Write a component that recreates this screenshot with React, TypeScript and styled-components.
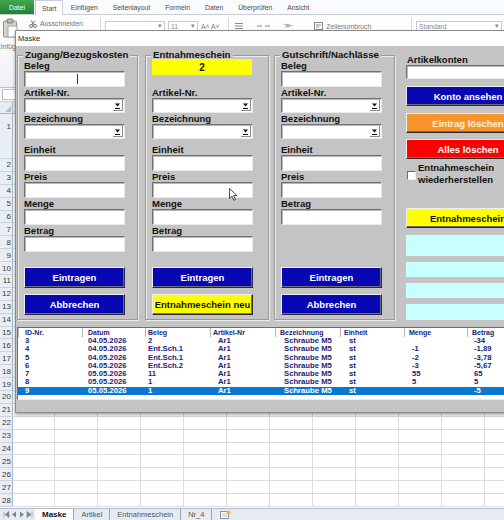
import React from 'react';
import styled, { createGlobalStyle } from 'styled-components';

const UI_FONT = '"Liberation Sans", Arial, sans-serif';
const FORM_GREY = '#c4c4c4';
const NAVY = '#1c1c76';

const GlobalStyle = createGlobalStyle`
  html, body { margin: 0; padding: 0; }
  body { background: #fff; font-family: ${UI_FONT}; }
  * { box-sizing: border-box; }
`;

const Screen = styled.div`
  position: relative;
  width: 504px;
  height: 520px;
  overflow: hidden;
  display: flex;
  flex-direction: column;
  background: #fff;
  font-family: ${UI_FONT};
`;

/* ---------- Excel window behind the form ---------- */

const TabStrip = styled.div`
  height: 15px;
  flex: none;
  display: flex;
  align-items: stretch;
  background: #fafbfc;
  border-bottom: 1px solid #c4ccd6;
  font-size: 6.8px;
  color: #4a4a4a;
  white-space: nowrap;
`;

const FileTab = styled.div`
  width: 34px;
  display: flex;
  align-items: center;
  justify-content: center;
  background: linear-gradient(#43a851, #22803a);
  color: #fff;
`;

const RibbonTab = styled.div<{ $active?: boolean }>`
  display: flex;
  align-items: center;
  padding: 0 ${(p) => (p.$active ? 6 : 7.5)}px;
  margin-left: ${(p) => (p.$active ? 1 : 0)}px;
  margin-bottom: ${(p) => (p.$active ? -1 : 0)}px;
  background: ${(p) => (p.$active ? '#fff' : 'transparent')};
  border: ${(p) => (p.$active ? '1px solid #c4ccd6' : 'none')};
  border-bottom: none;
`;

const Ribbon = styled.div`
  height: 73px;
  flex: none;
  display: flex;
  align-items: flex-start;
  padding-top: 3px;
  background: linear-gradient(#ffffff, #eef1f5);
  border-bottom: 1px solid #b8c1cc;
  font-size: 6.8px;
  color: #707070;
  white-space: nowrap;
`;

const ClipboardGroup = styled.div`
  width: 106px;
  height: 66px;
  flex: none;
  margin-left: -5px;
  display: flex;
  border-right: 1px solid #d6dce4;
`;

const PasteButton = styled.div`
  width: 30px;
  display: flex;
  flex-direction: column;
  align-items: center;
  gap: 5px;
`;

const SmallItem = styled.div`
  height: 11px;
  margin-left: 4px;
  display: flex;
  align-items: center;
  gap: 3px;
`;

const RibbonGroup = styled.div<{ $width: number }>`
  width: ${(p) => p.$width}px;
  height: 66px;
  flex: none;
  padding: 3px 0 0 4px;
  border-right: 1px solid #d6dce4;
  display: flex;
  align-items: flex-start;
  gap: 3px;
`;

const RibbonBox = styled.div<{ $width: number }>`
  width: ${(p) => p.$width}px;
  height: 10px;
  padding: 0 2px;
  display: flex;
  align-items: center;
  justify-content: space-between;
  background: #fff;
  border: 1px solid #c3cbd5;
  color: #8a8a8a;
`;

const RibbonGlyph = styled.span<{ $ml?: number }>`
  height: 10px;
  margin-left: ${(p) => p.$ml ?? 0}px;
  display: flex;
  align-items: center;
  gap: 3px;
  color: #7a7a7a;
`;

const FormulaBar = styled.div`
  height: 14px;
  flex: none;
  display: flex;
  align-items: center;
  padding-left: 2px;
  background: #f4f6f9;
  border-bottom: 1px solid #c9d0d9;
`;

const NameBox = styled.div`
  width: 70px;
  height: 11px;
  background: #fff;
  border: 1px solid #b6bfca;
`;

const Sheet = styled.div`
  flex: 1;
  min-height: 0;
  display: grid;
  grid-template-columns: 13px 42px repeat(11, 43px);
  grid-template-rows: 12px 45px repeat(27, 12.9px);
  overflow: hidden;
`;

const Corner = styled.div`
  display: flex;
  align-items: flex-end;
  justify-content: flex-end;
  padding: 0 1px 1px 0;
  background: #e7ecf2;
  border-right: 1px solid #a9b8c8;
  border-bottom: 1px solid #a9b8c8;
`;

const ColHead = styled.div`
  display: flex;
  align-items: center;
  justify-content: center;
  background: #e7ecf2;
  border-right: 1px solid #c2ccd8;
  border-bottom: 1px solid #a9b8c8;
  font-size: 7.5px;
  color: #444;
`;

const RowHead = styled.div<{ $tall?: boolean }>`
  display: flex;
  align-items: center;
  justify-content: flex-end;
  padding: 0 1px ${(p) => (p.$tall ? 19 : 0)}px 0;
  background: #e9eef4;
  border-right: 1px solid #a9b8c8;
  border-bottom: 1px solid #c9d2dd;
  font-size: 8px;
  color: #3a3a3a;
  overflow: hidden;
`;

const GridCell = styled.div`
  border-right: 1px solid #dadcdd;
  border-bottom: 1px solid #dadcdd;
`;

const SheetTabs = styled.div`
  height: 12px;
  flex: none;
  display: flex;
  align-items: stretch;
  background: #e6ebf1;
  border-top: 1px solid #b0bac6;
  font-size: 7.5px;
  color: #555;
  white-space: nowrap;
`;

const TabNav = styled.div`
  width: 35px;
  display: flex;
  align-items: center;
  justify-content: space-around;
  padding: 0 2px;
`;

const SheetTab = styled.div<{ $active?: boolean }>`
  display: flex;
  align-items: center;
  padding: 0 7px;
  border-right: 1px solid #9aa5b3;
  background: ${(p) => (p.$active ? '#fff' : 'transparent')};
  color: ${(p) => (p.$active ? '#111' : '#555')};
  font-weight: ${(p) => (p.$active ? 'bold' : 'normal')};
  font-size: ${(p) => (p.$active ? 8 : 7.5)}px;
`;

const NewSheet = styled.div`
  display: flex;
  align-items: center;
  padding: 0 8px;
`;

/* ---------- UserForm "Maske" ---------- */

const Dialog = styled.div`
  position: absolute;
  left: 15px;
  top: 30px;
  width: 545px;
  border: 1px solid #8a8a8a;
  background: ${FORM_GREY};
  box-shadow: 0 2px 3px rgba(0, 0, 0, 0.35);
`;

const TitleBar = styled.div`
  height: 15px;
  padding-left: 2px;
  background: #fff;
  color: #1e1e1e;
  font-size: 7.5px;
  line-height: 15px;
`;

const FormBody = styled.div`
  padding: 9px 0 12px 1px;
  display: flex;
  flex-direction: column;
  gap: 7px;
`;

const FormRow = styled.div`
  display: flex;
  align-items: flex-start;
`;

const Frame = styled.div<{ $width: number; $gap: number }>`
  width: ${(p) => p.$width}px;
  height: 265px;
  flex: none;
  margin-right: ${(p) => p.$gap}px;
  padding: 0 0 4px 6px;
  border: 1px solid #9a9a9a;
  box-shadow: inset 1px 1px 0 #ececec, 1px 1px 0 #ececec;
  display: flex;
  flex-direction: column;
`;

const Caption = styled.div`
  align-self: flex-start;
  margin: -7px 0 0 -1px;
  padding: 0 2px;
  background: ${FORM_GREY};
  color: #111;
  font-weight: bold;
  font-size: 9.7px;
  line-height: 11px;
  white-space: nowrap;
`;

const FieldLabel = styled.div<{ $spaced?: boolean }>`
  height: 11px;
  margin-top: ${(p) => (p.$spaced ? 5 : 0)}px;
  color: #111;
  font-weight: bold;
  font-size: 9.5px;
  line-height: 11px;
  white-space: nowrap;
`;

const TextBox = styled.div<{ $h?: number; $w?: number }>`
  width: ${(p) => p.$w ?? 101}px;
  height: ${(p) => p.$h ?? 16}px;
  flex: none;
  display: flex;
  align-items: center;
  background: #fff;
  border: 1px solid;
  border-color: #707070 #e9e9e9 #e9e9e9 #707070;
  box-shadow: inset 1px 1px 0 #b8b8b8;
`;

const ComboBox = styled(TextBox)`
  justify-content: flex-end;
  align-items: flex-start;
`;

const DropButton = styled.div`
  width: 10px;
  height: 11px;
  margin: 1px 1px 0 0;
  display: flex;
  background: #fafafa;
  border-right: 1px solid #8a8a8a;
  border-bottom: 1px solid #8a8a8a;
`;

const Caret = styled.span`
  width: 1px;
  height: 10px;
  margin-left: 52px;
  background: #333;
`;

const NumberBox = styled.div`
  width: 100px;
  height: 16px;
  margin: -1px 0 12px;
  display: flex;
  align-items: center;
  justify-content: center;
  background: #ffff00;
  color: #111;
  font-weight: bold;
  font-size: 10px;
`;

const ButtonStack = styled.div`
  margin-top: auto;
  display: flex;
  flex-direction: column;
  gap: 6px;
`;

const FormButton = styled.button<{ $bg: string; $fg: string; $w?: number; $h?: number; $mt?: number }>`
  display: block;
  width: ${(p) => p.$w ?? 101}px;
  height: ${(p) => p.$h ?? 21}px;
  margin: ${(p) => p.$mt ?? 0}px 0 0 0;
  padding: 0;
  background: ${(p) => p.$bg};
  color: ${(p) => p.$fg};
  border: 1px solid;
  border-color: #ededed #2a2a2a #2a2a2a #ededed;
  box-shadow: inset -1px -1px 0 #6e6e6e;
  font-family: ${UI_FONT};
  font-weight: bold;
  font-size: 9.5px;
  white-space: nowrap;
  overflow: hidden;
`;

const SideColumn = styled.div`
  width: 124px;
  flex: none;
  display: flex;
  flex-direction: column;
`;

const SideLabel = styled.div`
  margin: -1px 0 0 1px;
  height: 11px;
  color: #111;
  font-weight: bold;
  font-size: 9.5px;
  line-height: 11px;
`;

const CheckRow = styled.div`
  margin: 3px 0 0 1px;
  display: flex;
  align-items: center;
  gap: 2px;
  color: #111;
  font-weight: bold;
  font-size: 9.5px;
  line-height: 12px;
`;

const CheckBox = styled.span`
  width: 9px;
  height: 9px;
  flex: none;
  margin-top: 2px;
  background: #fff;
  border: 1px solid;
  border-color: #707070 #eeeeee #eeeeee #707070;
`;

const InfoField = styled.div<{ $h: number; $mt: number }>`
  height: ${(p) => p.$h}px;
  margin-top: ${(p) => p.$mt}px;
  background: #c8ffff;
`;

const ListBox = styled.div`
  width: 532px;
  height: 73px;
  background: #fff;
  border: 1px solid;
  border-color: #6e6e6e #ececec #ececec #6e6e6e;
  color: ${NAVY};
  font-weight: bold;
  overflow: hidden;
`;

const ListHead = styled.div`
  height: 9px;
  display: flex;
`;

const HeadCell = styled.div<{ $w: number; $pad: number }>`
  width: ${(p) => p.$w}px;
  flex: none;
  padding-left: ${(p) => p.$pad}px;
  border-left: 1px solid #b5b5b5;
  font-size: 7px;
  line-height: 9px;
  white-space: nowrap;
`;

const ListRow = styled.div<{ $selected?: boolean }>`
  height: 8.3px;
  display: flex;
  background: ${(p) => (p.$selected ? '#0a78d2' : 'transparent')};
  color: ${(p) => (p.$selected ? '#fff' : NAVY)};
`;

const ListCell = styled.div<{ $w: number; $pad: number }>`
  width: ${(p) => p.$w}px;
  flex: none;
  padding-left: ${(p) => p.$pad}px;
  font-size: 7.7px;
  line-height: 8.3px;
  white-space: nowrap;
  overflow: hidden;
`;

const Pointer = styled.svg`
  position: absolute;
  left: 229px;
  top: 188px;
  width: 9px;
  height: 13px;
  pointer-events: none;
`;

/* ---------- data ---------- */

const ribbonTabs = ['Einfügen', 'Seitenlayout', 'Formeln', 'Daten', 'Überprüfen', 'Ansicht'];
const colLetters = 'ABCDEFGHIJKL'.split('');
const rowNumbers = Array.from({ length: 28 }, (_, i) => i + 1);

const columns = [
  { title: 'ID-Nr.', w: 64, head: 6, cell: 7 },
  { title: 'Datum', w: 63, head: 5, cell: 6 },
  { title: 'Beleg', w: 65, head: 2, cell: 3 },
  { title: 'Artikel-Nr', w: 65, head: 2, cell: 8 },
  { title: 'Bezeichnung', w: 65, head: 4, cell: 9 },
  { title: 'Einheit', w: 64, head: 3, cell: 9 },
  { title: 'Menge', w: 63, head: 4, cell: 8 },
  { title: 'Betrag', w: 70, head: 4, cell: 7 },
];

const bookings = [
  ['3', '04.05.2026', '2', 'Ar1', 'Schraube M5', 'st', '', '-34'],
  ['4', '04.05.2026', 'Ent.Sch.1', 'Ar1', 'Schraube M5', 'st', '-1', '-1,89'],
  ['5', '04.05.2026', 'Ent.Sch.1', 'Ar1', 'Schraube M5', 'st', '-2', '-3,78'],
  ['6', '04.05.2026', 'Ent.Sch.2', 'Ar1', 'Schraube M5', 'st', '-3', '-5,67'],
  ['7', '05.05.2026', '11', 'Ar1', 'Schraube M5', 'st', '55', '65'],
  ['8', '05.05.2026', '1', 'Ar1', 'Schraube M5', 'st', '5', '5'],
  ['9', '05.05.2026', '1', 'Ar1', 'Schraube M5', 'st', '', '-5'],
];
const selectedId = '9';

type FieldDef = { label: string; combo?: boolean; spaced?: boolean; caret?: boolean };

const fieldsZugang: FieldDef[] = [
  { label: 'Beleg', caret: true },
  { label: 'Artikel-Nr.', combo: true },
  { label: 'Bezeichnung', combo: true },
  { label: 'Einheit', spaced: true },
  { label: 'Preis' },
  { label: 'Menge' },
  { label: 'Betrag' },
];

const fieldsEntnahme: FieldDef[] = [
  { label: 'Artikel-Nr.', combo: true },
  { label: 'Bezeichnung', combo: true },
  { label: 'Einheit', spaced: true },
  { label: 'Preis' },
  { label: 'Menge' },
  { label: 'Betrag' },
];

const fieldsGutschrift: FieldDef[] = [
  { label: 'Beleg' },
  { label: 'Artikel-Nr.', combo: true },
  { label: 'Bezeichnung', combo: true },
  { label: 'Einheit', spaced: true },
  { label: 'Preis' },
  { label: 'Betrag' },
];

const BLUE = '#0707b4';

/* ---------- pieces ---------- */

function DropArrow() {
  return (
    <DropButton>
      <svg width="9" height="10" viewBox="0 0 9 10">
        <path d="M2 3.5h5L4.5 6.5z" fill="#111" />
        <rect x="2" y="8" width="5" height="1" fill="#111" />
      </svg>
    </DropButton>
  );
}

function Fields({ items }: { items: FieldDef[] }) {
  return (
    <>
      {items.map((f, i) => (
        <React.Fragment key={f.label + i}>
          <FieldLabel $spaced={f.spaced}>{f.label}</FieldLabel>
          {f.combo ? (
            <ComboBox $h={15}>
              <DropArrow />
            </ComboBox>
          ) : (
            <TextBox>{f.caret && <Caret />}</TextBox>
          )}
        </React.Fragment>
      ))}
    </>
  );
}

function ExcelBackdrop() {
  return (
    <>
      <TabStrip>
        <FileTab>Datei</FileTab>
        <RibbonTab $active>Start</RibbonTab>
        {ribbonTabs.map((t) => (
          <RibbonTab key={t}>{t}</RibbonTab>
        ))}
      </TabStrip>

      <Ribbon>
        <ClipboardGroup>
          <PasteButton>
            <svg width="16" height="20" viewBox="0 0 16 20">
              <rect x="1.5" y="3" width="13" height="16" rx="1" fill="#d9d3c3" stroke="#9a9484" />
              <rect x="5" y="1" width="6" height="4" rx="1" fill="#b8b8b8" stroke="#7d7d7d" />
              <rect x="6" y="8" width="9" height="11" fill="#fff" stroke="#9aa6b5" />
            </svg>
            <span>Einfügen</span>
          </PasteButton>
          <SmallItem>
            <svg width="8" height="8" viewBox="0 0 8 8">
              <circle cx="2" cy="6" r="1.5" fill="none" stroke="#7a7a7a" />
              <circle cx="6" cy="6" r="1.5" fill="none" stroke="#7a7a7a" />
              <path d="M2.8 5L6 0.5M5.2 5L2 0.5" stroke="#7a7a7a" />
            </svg>
            Ausschneiden
          </SmallItem>
        </ClipboardGroup>

        <RibbonGroup $width={128}>
          <RibbonBox $width={60}>
            <span />
            <span>▾</span>
          </RibbonBox>
          <RibbonBox $width={30}>
            <span>11</span>
            <span>▾</span>
          </RibbonBox>
          <RibbonGlyph>A˄ A˅</RibbonGlyph>
        </RibbonGroup>

        <RibbonGroup $width={183}>
          <RibbonGlyph>
            <svg width="44" height="8" viewBox="0 0 44 8">
              <path d="M2 1.5h8M2 4h8M2 6.5h8M24 4h5M32 4h5" stroke="#8a8a8a" />
            </svg>
          </RibbonGlyph>
          <RibbonGlyph $ml={4}>≫·</RibbonGlyph>
          <RibbonGlyph $ml={18}>
            <svg width="9" height="8" viewBox="0 0 9 8">
              <rect x="0.5" y="0.5" width="8" height="7" fill="#fff" stroke="#8a8a8a" />
              <path d="M2 3h5M2 5h3" stroke="#8a8a8a" />
            </svg>
            Zeilenumbruch
          </RibbonGlyph>
        </RibbonGroup>

        <RibbonGroup $width={100}>
          <RibbonBox $width={86}>
            <span>Standard</span>
            <span>▾</span>
          </RibbonBox>
        </RibbonGroup>
      </Ribbon>

      <FormulaBar>
        <NameBox />
      </FormulaBar>

      <Sheet>
        <Corner>
          <svg width="6" height="6" viewBox="0 0 6 6">
            <path d="M6 0V6H0z" fill="#b4bfcc" />
          </svg>
        </Corner>
        {colLetters.map((l) => (
          <ColHead key={l}>{l}</ColHead>
        ))}
        {rowNumbers.map((r) => (
          <React.Fragment key={r}>
            <RowHead $tall={r === 1}>{r}</RowHead>
            {colLetters.map((l) => (
              <GridCell key={l} />
            ))}
          </React.Fragment>
        ))}
      </Sheet>

      <SheetTabs>
        <TabNav>
          <svg width="30" height="7" viewBox="0 0 30 7">
            <path d="M1 0.5v6M6 0.5L2 3.5l4 3z" fill="#7a8594" stroke="#7a8594" strokeWidth="0.6" />
            <path d="M13 0.5L9 3.5l4 3z" fill="#7a8594" />
            <path d="M17 0.5l4 3-4 3z" fill="#7a8594" />
            <path d="M24 0.5l4 3-4 3zM29 0.5v6" fill="#7a8594" stroke="#7a8594" strokeWidth="0.6" />
          </svg>
        </TabNav>
        <SheetTab $active>Maske</SheetTab>
        <SheetTab>Artikel</SheetTab>
        <SheetTab>Entnahmeschein</SheetTab>
        <SheetTab>Nr_4</SheetTab>
        <NewSheet>
          <svg width="11" height="9" viewBox="0 0 11 9">
            <rect x="0.5" y="1.5" width="8" height="7" fill="#fff" stroke="#8895a5" />
            <path d="M2 4h5M2 6h5" stroke="#b7c1cd" />
            <circle cx="8.5" cy="2.5" r="2" fill="#f0b93a" />
          </svg>
        </NewSheet>
      </SheetTabs>
    </>
  );
}

function MaskeForm() {
  return (
    <Dialog>
      <TitleBar>Maske</TitleBar>
      <FormBody>
        <FormRow>
          <Frame $width={121} $gap={7}>
            <Caption>Zugang/Bezugskosten</Caption>
            <Fields items={fieldsZugang} />
            <ButtonStack>
              <FormButton $bg={BLUE} $fg="#fff">Eintragen</FormButton>
              <FormButton $bg={BLUE} $fg="#fff">Abbrechen</FormButton>
            </ButtonStack>
          </Frame>

          <Frame $width={124} $gap={5}>
            <Caption>Entnahmeschein</Caption>
            <NumberBox>2</NumberBox>
            <Fields items={fieldsEntnahme} />
            <ButtonStack>
              <FormButton $bg={BLUE} $fg="#fff">Eintragen</FormButton>
              <FormButton $bg="#ffff00" $fg="#111">Entnahmeschein neu</FormButton>
            </ButtonStack>
          </Frame>

          <Frame $width={121} $gap={11}>
            <Caption>Gutschrift/Nachlässe</Caption>
            <Fields items={fieldsGutschrift} />
            <ButtonStack>
              <FormButton $bg={BLUE} $fg="#fff">Eintragen</FormButton>
              <FormButton $bg={BLUE} $fg="#fff">Abbrechen</FormButton>
            </ButtonStack>
          </Frame>

          <SideColumn>
            <SideLabel>Artikelkonten</SideLabel>
            <TextBox $w={124} $h={14} />
            <FormButton $bg={BLUE} $fg="#fff" $w={124} $h={20} $mt={7}>
              Konto ansehen
            </FormButton>
            <FormButton $bg="#f7952c" $fg="#fff3d6" $w={124} $h={20} $mt={7}>
              Eintrag löschen
            </FormButton>
            <FormButton $bg="#ff0000" $fg="#fff" $w={124} $h={20} $mt={6}>
              Alles löschen
            </FormButton>
            <CheckRow>
              <CheckBox />
              <span>
                Entnahmeschein
                <br />
                wiederherstellen
              </span>
            </CheckRow>
            <FormButton $bg="#ffff00" $fg="#111" $w={124} $h={20} $mt={22}>
              Entnahmeschein
            </FormButton>
            <InfoField $h={21} $mt={7} />
            <InfoField $h={15} $mt={6} />
            <InfoField $h={15} $mt={6} />
            <InfoField $h={16} $mt={6} />
          </SideColumn>
        </FormRow>

        <ListBox>
          <ListHead>
            {columns.map((c) => (
              <HeadCell key={c.title} $w={c.w} $pad={c.head}>
                {c.title}
              </HeadCell>
            ))}
          </ListHead>
          {bookings.map((row) => (
            <ListRow key={row[0]} $selected={row[0] === selectedId}>
              {row.map((v, i) => (
                <ListCell key={i} $w={columns[i].w} $pad={columns[i].cell}>
                  {v}
                </ListCell>
              ))}
            </ListRow>
          ))}
        </ListBox>
      </FormBody>
    </Dialog>
  );
}

export default function App() {
  return (
    <>
      <GlobalStyle />
      <Screen>
        <ExcelBackdrop />
        <MaskeForm />
        <Pointer viewBox="0 0 9 13">
          <path
            d="M0.5 0.5V10.5L3 8.2L4.8 12.3L6.4 11.6L4.7 7.6H8z"
            fill="#fff"
            stroke="#222"
            strokeWidth="0.8"
            strokeLinejoin="round"
          />
        </Pointer>
      </Screen>
    </>
  );
}
